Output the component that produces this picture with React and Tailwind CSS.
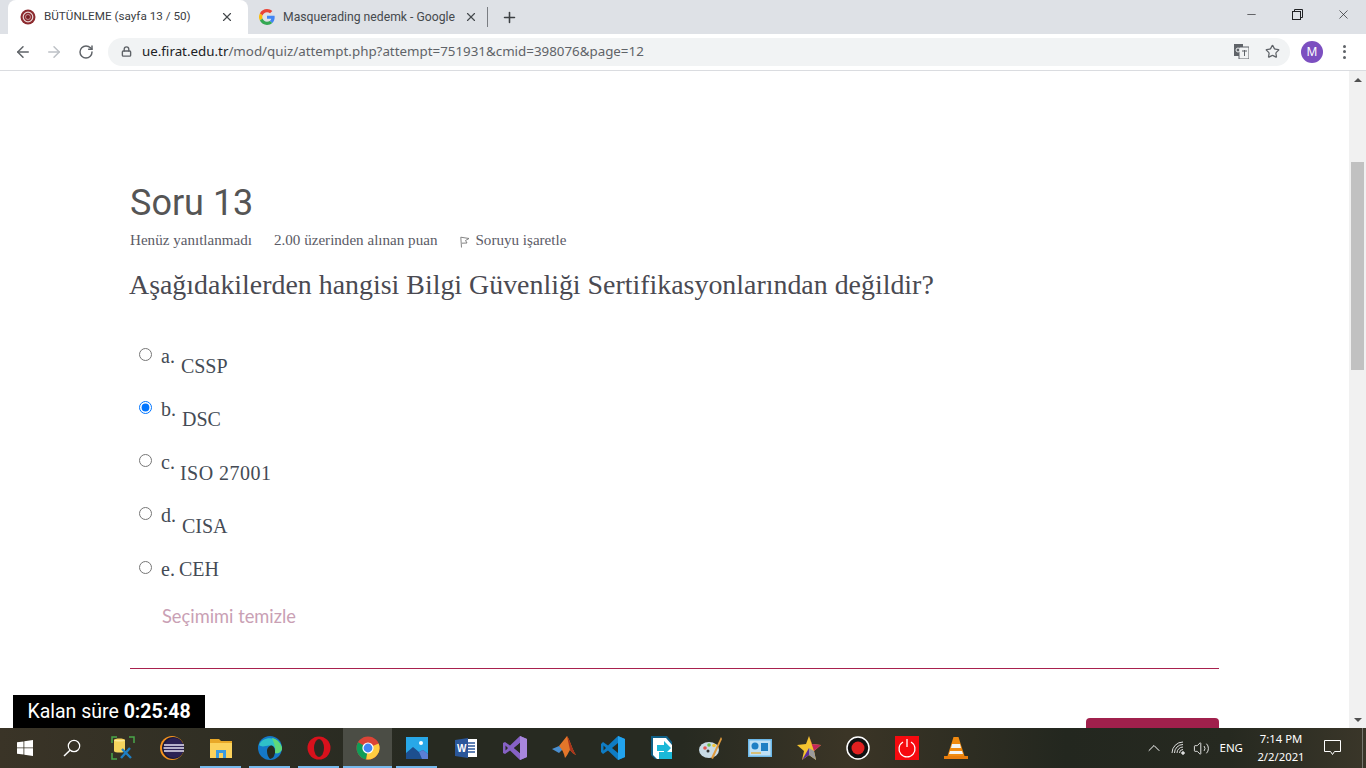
// Quiz attempt page inside a Chrome window, with the Windows taskbar below
import { ArrowLeft, ArrowRight, RotateCw, Lock, Star, Plus, X, Minus, ChevronUp, Volume2 } from 'lucide-react';

const ChromeLogo = ({ size = 24 }) => (
  <svg width={size} height={size} viewBox="0 0 24 24">
    <circle cx="12" cy="12" r="11.5" fill="#db4437" />
    <path d="M12 12 L2.1 6.2 A11.5 11.5 0 0 0 10.2 23.4 Z" fill="#0f9d58" />
    <path d="M12 12 L22.6 7.5 A11.5 11.5 0 0 1 10.2 23.4 Z" fill="#ffcd40" />
    <circle cx="12" cy="12" r="5.6" fill="#fff" />
    <circle cx="12" cy="12" r="4.4" fill="#4285f4" />
  </svg>
);

const GoogleG = () => (
  <svg width="16" height="16" viewBox="0 0 48 48">
    <path fill="#ea4335" d="M24 9.5c3.5 0 6.700 1.200 9.200 3.600l6.900-6.900C35.900 2.400 30.500 0 24 0 14.600 0 6.500 5.400 2.600 13.200l8 6.200C12.500 13.700 17.800 9.500 24 9.500z" />
    <path fill="#4285f4" d="M47 24.500c0-1.600-.1-3.100-.4-4.500H24v9h12.900c-.6 3-2.200 5.500-4.800 7.200l7.700 6c4.500-4.200 7.200-10.300 7.200-17.700z" />
    <path fill="#fbbc05" d="M10.600 28.600c-.5-1.400-.8-3-.8-4.600s.3-3.200.8-4.600l-8-6.200C.9 16.500 0 20.100 0 24s.9 7.500 2.600 10.800l8-6.200z" />
    <path fill="#34a853" d="M24 48c6.500 0 11.900-2.100 15.900-5.800l-7.700-6c-2.200 1.500-5 2.300-8.200 2.300-6.200 0-11.500-4.200-13.400-9.900l-8 6.200C6.500 42.600 14.600 48 24 48z" />
  </svg>
);

const FiratIcon = () => (
  <svg width="16" height="16" viewBox="0 0 16 16">
    <circle cx="8" cy="8" r="7.500" fill="#8c2a2e" />
    <circle cx="8" cy="8" r="4.800" fill="none" stroke="#e8d8d8" strokeWidth="1.200" />
    <circle cx="8" cy="8" r="2.500" fill="#7a1f24" stroke="#e8d8d8" strokeWidth="0.600" />
  </svg>
);

// Icons of the pinned taskbar apps
const taskIcons = [
  { key: 'db', under: false, svg: (
    <svg width="24" height="24" viewBox="0 0 24 24">
      <path d="M1 7V1h5M18 1h5v6M1 17v6h5" fill="none" stroke="#4aa64a" strokeWidth="1.500" />
      <path d="M3 4c0-2 11-2 11 0v11c0 2-11 2-11 0z" fill="#f4d35e" />
      <path d="M3 4c0 2 11 2 11 0" fill="#fbe89a" />
      <path d="M10 22l9-10M11 13l9 9" stroke="#1f7fc4" strokeWidth="2.400" />
    </svg>
  ) },
  { key: 'eclipse', under: false, svg: (
    <svg width="24" height="24" viewBox="0 0 24 24">
      <circle cx="12" cy="12" r="12" fill="#f7941e" />
      <circle cx="13" cy="12" r="11" fill="#1b1a3a" />
      <circle cx="14" cy="12" r="10" fill="#2c2255" />
      <path d="M4 9h20M3.500 12h21M4 15h20" stroke="#e5e2f2" strokeWidth="1.600" />
    </svg>
  ) },
  { key: 'explorer', under: true, svg: (
    <svg width="24" height="24" viewBox="0 0 24 24">
      <path d="M1 3h9l2 2h11v17H1z" fill="#e8a828" />
      <path d="M1 7h22v15H1z" fill="#fbd25c" />
      <path d="M7 14h10v8H7z" fill="#3a9be0" />
      <path d="M10 17h4v5h-4z" fill="#fbd25c" />
    </svg>
  ) },
  { key: 'edge', under: true, svg: (
    <svg width="24" height="24" viewBox="0 0 24 24">
      <circle cx="12" cy="12" r="12" fill="#1478c8" />
      <path d="M1 9C4 0 21-1 24 12c0 4-4 6-7 5 2-4-1-8-6-7.500-4 .5-7 2-10-.5z" fill="#2fc0c8" />
      <path d="M14 2c5 1 9 5 10 10 0 4-4 6-7 5 1-5-1-10-3-15z" fill="#5fd87a" />
      <path d="M9 15c0-3 2-5.500 5-5.500 2 1 3.500 4 3 7.500-1 3-1 5-5 6-2-2-3-5-3-8z" fill="#262a20" />
    </svg>
  ) },
  { key: 'opera', under: true, svg: (
    <svg width="24" height="24" viewBox="0 0 24 24">
      <ellipse cx="12" cy="12" rx="11.500" ry="11.500" fill="#d8111c" />
      <ellipse cx="12" cy="12" rx="5" ry="9" fill="#2b2a22" />
    </svg>
  ) },
  { key: 'chrome', under: true, active: true, svg: <ChromeLogo /> },
  { key: 'photos', under: true, svg: (
    <svg width="24" height="24" viewBox="0 0 24 24">
      <rect x="1" y="1" width="22" height="22" fill="#28a8e8" />
      <circle cx="16" cy="7" r="2" fill="#fff" />
      <path d="M1 23V17l7-6 6 5 4-2 5 4v5z" fill="#1d4f8f" />
      <path d="M14 16l4-2 5 4v5h-6z" fill="#5b7fd6" />
    </svg>
  ) },
  { key: 'word', under: false, svg: (
    <svg width="24" height="24" viewBox="0 0 24 24">
      <path d="M8 3h15v18H8z" fill="#fff" />
      <path d="M13 7h8M13 10h8M13 13h8M13 16h8" stroke="#2b579a" strokeWidth="1.300" />
      <path d="M1 4l13-2v20L1 20z" fill="#2b579a" />
      <text x="3" y="16" fontSize="10" fontWeight="700" fill="#fff" fontFamily="Liberation Sans, sans-serif">W</text>
    </svg>
  ) },
  { key: 'vs', under: false, svg: (
    <svg width="24" height="24" viewBox="0 0 24 24">
      <path d="M17 0l7 3v18l-7 3-10-9.500L2 18l-2-1V7l2-1 5 3.500z" fill="#8661c5" />
      <path d="M17 7l-6 5 6 5zM2.500 9.500v5L5 12z" fill="#262a20" />
      <path d="M17 0l7 3v18l-7 3z" fill="#a887dd" />
      <path d="M17 7l-6 5 6 5z" fill="#262a20" />
    </svg>
  ) },
  { key: 'matlab', under: false, svg: (
    <svg width="24" height="24" viewBox="0 0 24 24">
      <path d="M0 13l7-3 4 3-4 4z" fill="#4a8fd0" />
      <path d="M7 10l8-10c3 4 5 13 9 19-3-1-4-3-6-5-2 3-3 6-5 8-1-5-3-9-6-12z" fill="#e3762a" />
      <path d="M15 0c3 4 5 13 9 19-3-1-4-3-6-5-1-5-2-9-3-14z" fill="#a8331c" />
    </svg>
  ) },
  { key: 'vscode', under: false, svg: (
    <svg width="24" height="24" viewBox="0 0 24 24">
      <path d="M17 0l7 3v18l-7 3-10-9.500L2 18l-2-2V8l2-2 5 3.500z" fill="#0f7cc4" />
      <path d="M17 0l7 3v18l-7 3z" fill="#22a3ee" />
      <path d="M17 7l-6 5 6 5z" fill="#262a20" />
      <path d="M2.500 9.500v5L5 12z" fill="#262a20" />
    </svg>
  ) },
  { key: 'move', under: false, svg: (
    <svg width="24" height="24" viewBox="0 0 24 24">
      <path d="M1 0h16l5 6v8H8v9H5L1 19z" fill="#0f5f86" />
      <path d="M3 2h13l6 7v14H7l-4-4z" fill="#fff" />
      <path d="M9 16h13v7H9z" fill="#1bb8d8" />
      <path d="M7 9h7V5l7 7-7 7v-4H7z" fill="#1bb8d8" />
    </svg>
  ) },
  { key: 'paint', under: false, svg: (
    <svg width="24" height="24" viewBox="0 0 24 24">
      <ellipse cx="10" cy="14" rx="10" ry="8" fill="#c9dbe6" />
      <circle cx="6" cy="12" r="1.800" fill="#e0564f" />
      <circle cx="10" cy="9" r="1.800" fill="#6fbf4a" />
      <circle cx="15" cy="9.500" r="1.800" fill="#f2c53d" />
      <circle cx="9" cy="15" r="1.500" fill="#333" />
      <path d="M22 1l1 2-9 20-2-1z" fill="#e09a3e" />
    </svg>
  ) },
  { key: 'panel', under: false, svg: (
    <svg width="24" height="24" viewBox="0 0 24 24">
      <rect x="0" y="3" width="24" height="18" fill="#6cb8e8" />
      <rect x="1.500" y="4.500" width="21" height="15" fill="#bfe0f5" />
      <circle cx="7" cy="10" r="3.500" fill="#1f7fc4" />
      <path d="M13 7h7v8h-7z" fill="#1f7fc4" />
      <path d="M3 17h10" stroke="#e8a828" strokeWidth="1.200" />
    </svg>
  ) },
  { key: 'star', under: false, svg: (
    <svg width="24" height="24" viewBox="0 0 24 24">
      <path d="M12 0l3 8 9 1-7 6 2 9-7-5-7 5 2-9-7-6 9-1z" fill="#f4c430" />
      <path d="M12 0l3 8 9 1-7 6z" fill="#c2265c" />
      <path d="M12 12l5 3 2 9-7-5z" fill="#9a9a9a" />
      <path d="M12 12v7l-7 5z" fill="#5a2d9c" />
    </svg>
  ) },
  { key: 'record', under: false, svg: (
    <svg width="24" height="24" viewBox="0 0 24 24">
      <circle cx="12" cy="12" r="11" fill="#111" stroke="#fff" strokeWidth="1.500" />
      <circle cx="12" cy="12" r="6.500" fill="#e02020" />
    </svg>
  ) },
  { key: 'power', under: false, svg: (
    <svg width="24" height="24" viewBox="0 0 24 24">
      <rect width="24" height="24" fill="#f60a0f" />
      <path d="M8 6a8 8 0 1 0 8 0M12 3v8" fill="none" stroke="#fff" strokeWidth="1.300" />
    </svg>
  ) },
  { key: 'vlc', under: false, svg: (
    <svg width="24" height="24" viewBox="0 0 24 24">
      <path d="M9.500 1h5l6 19H3.500z" fill="#f08a10" />
      <path d="M8 8h8l1 4H7zM6 15h12l1 3H5z" fill="#f3f3f3" />
      <path d="M0 20h24v3H0z" fill="#e87c0c" />
    </svg>
  ) },
];

const options = [
  { id: 'a', body: 'CSSP', pad: 'pl-[6px]', top: 'pt-[12px]' },
  { id: 'b', body: 'DSC', pad: 'pl-[6px]', top: 'pt-[12px]', checked: true },
  { id: 'c', body: 'ISO 27001', pad: 'pl-[5px]', top: 'pt-[13px]', wide: 'tracking-[0.5px]' },
  { id: 'd', body: 'CISA', pad: 'pl-[6px]', top: 'pt-[13px]' },
];

const serif = 'font-["Liberation_Serif",serif]';

const TabClose = () => <X className="shrink-0 text-[#45494d]" size={14} strokeWidth={2} />;

const ChromeBar = () => (
  <div className='shrink-0 font-["Noto_Sans",sans-serif]'>
    {/* Tab strip */}
    <div className="flex h-[34px] bg-[#dee1e6]">
      <div className="ml-[8px] flex w-[240px] items-center rounded-t-lg bg-white pl-[12px] pr-[14px]">
        <FiratIcon />
        <span className='ml-[8px] flex-1 truncate font-["Roboto",sans-serif] text-[11.700px] text-[#3c4043]'>BÜTÜNLEME (sayfa 13 / 50)</span>
        <TabClose />
      </div>
      <div className="flex w-[239px] items-center pl-[11px] pr-[9px]">
        <GoogleG />
        <span className='ml-[8px] w-[172px] overflow-hidden whitespace-nowrap font-["Roboto",sans-serif] text-[12.200px] text-[#45494d]'>Masquerading nedemk - Google</span>
        <div className="ml-auto"><TabClose /></div>
      </div>
      <div className="my-[7px] w-px bg-[#7a7d82]" />
      <div className="ml-[13px] flex items-center text-[#3c4043]">
        <Plus size={17} strokeWidth={2.200} />
      </div>
      <div className="ml-auto flex h-[28px] items-center text-[#202124]">
        <div className="flex w-[46px] justify-center"><Minus size={13} strokeWidth={1.200} /></div>
        <div className="flex w-[46px] justify-center">
          <svg width="11" height="11" viewBox="0 0 11 11" fill="none" stroke="#202124" strokeWidth="1">
            <rect x="0.500" y="2.500" width="8" height="8" />
            <path d="M2.500 2.500V.5h8v8H8.500" />
          </svg>
        </div>
        <div className="flex w-[46px] justify-center"><X size={15} strokeWidth={1.100} /></div>
      </div>
    </div>
    {/* Toolbar */}
    <div className="flex h-[37px] items-center border-b border-[#dadce0] bg-white pb-px">
      <ArrowLeft className="ml-[14px] text-[#5f6368]" size={18} strokeWidth={2} />
      <ArrowRight className="ml-[13px] text-[#bdc1c6]" size={18} strokeWidth={2} />
      <RotateCw className="ml-[15px] text-[#5f6368]" size={16} strokeWidth={2.200} />
      <div className="ml-[14px] flex h-[28px] w-[1182px] items-center rounded-full bg-[#f1f3f4] pl-[13px] pr-[10px]">
        <Lock className="text-[#5f6368]" size={11} strokeWidth={3} />
        <span className="ml-[10px] flex-1 text-[13.350px] text-[#5f6368]">
          <span className="text-[#202124]">ue.firat.edu.tr</span>/mod/quiz/attempt.php?attempt=751931&amp;cmid=398076&amp;page=12
        </span>
        <svg width="15" height="15" viewBox="0 0 15 15" className="mr-[16px]">
          <rect x="0" y="0" width="9" height="12" fill="#5f6368" />
          <rect x="5" y="3" width="10" height="12" fill="#f1f3f4" stroke="#5f6368" />
          <circle cx="4" cy="6" r="2" fill="none" stroke="#f1f3f4" />
          <path d="M8 7h5M10.500 6v6" stroke="#5f6368" />
        </svg>
        <Star className="text-[#5f6368]" size={15} strokeWidth={2} />
      </div>
      <div className='ml-[11px] flex h-[22px] w-[22px] items-center justify-center rounded-full bg-[#7c4fc0] text-[12px] text-white'>M</div>
      <div className="ml-[20px] flex flex-col gap-[2.500px]">
        <div className="h-[3px] w-[3px] rounded-full bg-[#5f6368]" />
        <div className="h-[3px] w-[3px] rounded-full bg-[#5f6368]" />
        <div className="h-[3px] w-[3px] rounded-full bg-[#5f6368]" />
      </div>
    </div>
  </div>
);

const Scrollbar = () => (
  <div className="flex w-[17px] shrink-0 flex-col bg-[#f1f1f1]">
    <div className="flex h-[17px] items-center justify-center">
      <div className="h-0 w-0 border-x-[4px] border-b-[4px] border-x-transparent border-b-[#505050]" />
    </div>
    <div className="ml-[2px] mt-[74px] h-[208px] w-[13px] bg-[#c1c1c1]" />
    <div className="mt-auto flex h-[17px] items-center justify-center">
      <div className="h-0 w-0 border-x-[4px] border-t-[4px] border-x-transparent border-t-[#505050]" />
    </div>
  </div>
);

const Question = () => (
  <div className="flex-1 overflow-hidden bg-white pl-[130px] pr-[130px] pt-[109px]">
    <h2 className='font-["Roboto",sans-serif] text-[36px] leading-[46px] text-[#555]'>Soru 13</h2>
    <div className={`${serif} mt-[5px] flex items-center text-[15.100px] leading-[18px] text-[#5b5b66]`}>
      <span>Henüz yanıtlanmadı</span>
      <span className="ml-[22px]">2.00 üzerinden alınan puan</span>
      <svg width="10" height="12" viewBox="0 0 10 12" className="ml-[23px] mt-[3px]" fill="none" stroke="#777" strokeWidth="0.900">
        <path d="M1.500 11.500L.8 1.200 9 2.500 5.500 4.500 7 7 2 7.200" />
      </svg>
      <span className="ml-[5px]">Soruyu işaretle</span>
    </div>
    <p className={`${serif} -ml-px mt-[20px] text-[27.900px] leading-[32px] text-[#4a4a52]`}>
      Aşağıdakilerden hangisi Bilgi Güvenliği Sertifikasyonlarından değildir?
    </p>
    <div className={`${serif} mt-[41px] text-[20px] text-[#444b55]`}>
      {options.map((o) => (
        <label key={o.id} className="flex h-[53px] items-start pl-[9px]">
          <input type="radio" name="answer" defaultChecked={o.checked} className="mt-[6px] h-[13px] w-[13px]" />
          <span className="ml-[9px] mt-[2px] leading-[24px]">{o.id}.</span>
          <span className={`${o.pad} ${o.top} ${o.wide || ''} leading-[24px]`}>{o.body}</span>
        </label>
      ))}
      <label className="flex h-[24px] items-center pl-[9px]">
        <input type="radio" name="answer" className="h-[13px] w-[13px] translate-y-[1px]" />
        <span className="ml-[9px] mt-[6px] leading-[24px]">e.&nbsp;<span className="-ml-px">CEH</span></span>
      </label>
    </div>
    <div className='ml-[32px] mt-[26px] font-["Lato",sans-serif] text-[18.300px] leading-[24px] text-[#c9a0b4]'>Seçimimi temizle</div>
    <div className="mt-[40px] h-px bg-[#a8214e]" />
    <div className="ml-auto mt-[49px] h-[40px] w-[133px] rounded-t-[4px] bg-[#a0204c]" />
  </div>
);

const Taskbar = () => (
  <div className='flex h-[40px] shrink-0 items-stretch bg-[linear-gradient(90deg,#3a3427_0%,#272a21_30%,#272a21_50%,#3b3526_62%,#23271f_78%,#262920_90%,#3a3629_100%)] font-["Noto_Sans",sans-serif] text-white'>
    <div className="flex w-[49px] items-center justify-center">
      <svg width="16" height="16" viewBox="0 0 16 16" fill="#fff">
        <path d="M0 2.300L6.500 1.400V7.500H0zM7.300 1.300L16 0V7.500H7.300zM0 8.300H6.500V14.500L0 13.700zM7.300 8.300H16V16L7.300 14.800z" />
      </svg>
    </div>
    <div className="flex w-[49px] items-center justify-center pr-[3px]">
      <svg width="18" height="18" viewBox="0 0 18 18" fill="none" stroke="#fff" strokeWidth="1.200">
        <circle cx="11" cy="7" r="5.700" />
        <path d="M7 11.200L1 17" strokeWidth="1.500" />
      </svg>
    </div>
    {taskIcons.map((t) => (
      <div key={t.key} className={`relative flex w-[49px] items-center justify-center ${t.active ? 'bg-[#4b4d45]' : ''}`}>
        {t.svg}
        {t.under && <div className={`absolute bottom-0 h-[2px] bg-[#76b9ed] ${t.active ? 'inset-x-0' : 'inset-x-[4px]'}`} />}
      </div>
    ))}
    <div className="ml-auto flex items-center">
      <ChevronUp size={20} strokeWidth={1.200} />
      <svg width="16" height="14" viewBox="0 0 16 14" className="ml-[7px]" fill="none" stroke="#ddd" strokeWidth="1">
        <path d="M1 12a11 11 0 0 1 11-11M3.500 12a8.500 8.500 0 0 1 8.500-8.500M6 12a6 6 0 0 1 6-6M8.500 12a3.500 3.500 0 0 1 3.500-3.500" />
        <circle cx="12" cy="12" r="1.300" fill="#ddd" />
      </svg>
      <Volume2 size={17} strokeWidth={1.200} className="ml-[6px]" />
      <span className="ml-[9px] text-[11.500px]">ENG</span>
      <div className="ml-[3px] flex w-[70px] flex-col items-center text-[11.300px] leading-[18px]">
        <span>7:14 PM</span>
        <span>2/2/2021</span>
      </div>
      <svg width="17" height="16" viewBox="0 0 17 16" className="ml-[8px]" fill="none" stroke="#fff" strokeWidth="1">
        <path d="M.5.5h16v11h-6l-2 3-2-3h-6z" />
      </svg>
      <div className="ml-[21px] mr-[3px] h-[40px] w-px bg-[#77776f]" />
    </div>
  </div>
);

export default function App() {
  return (
    <div className="relative flex h-screen flex-col overflow-hidden bg-white">
      <ChromeBar />
      <div className="flex min-h-0 flex-1">
        <Question />
        <Scrollbar />
      </div>
      {/* Countdown that floats over the page */}
      <div className='absolute left-[13px] top-[695px] flex h-[33px] w-[192px] items-center justify-center bg-black font-["Roboto",sans-serif] text-[19.500px] text-white'>
        Kalan süre&nbsp;<b>0:25:48</b>
      </div>
      <Taskbar />
    </div>
  );
}
